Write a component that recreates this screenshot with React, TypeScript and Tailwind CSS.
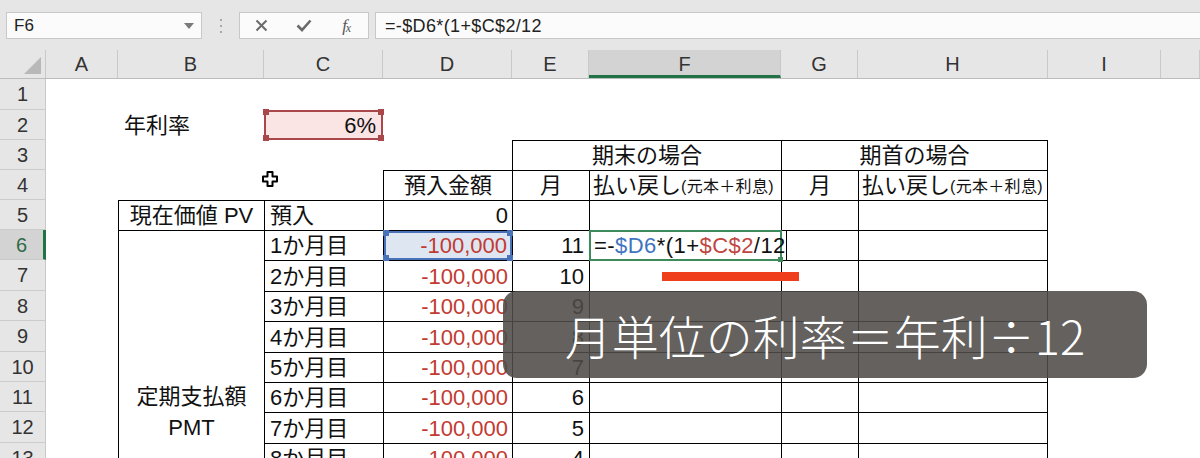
import React from "react";

const RS = [
  "",
  "row-start-1",
  "row-start-2",
  "row-start-3",
  "row-start-4",
  "row-start-5",
  "row-start-6",
  "row-start-7",
  "row-start-8",
  "row-start-9",
  "row-start-10",
  "row-start-11",
  "row-start-12",
  "row-start-13",
  "row-start-14",
  "row-start-15",
  "row-start-16",
  "row-start-17",
];

const COLS: { l: string; w: string; sel?: boolean }[] = [
  { l: "A", w: "w-[72px]" },
  { l: "B", w: "w-[146px]" },
  { l: "C", w: "w-[119px]" },
  { l: "D", w: "w-[129px]" },
  { l: "E", w: "w-[77px]" },
  { l: "F", w: "w-[192px]", sel: true },
  { l: "G", w: "w-[77px]" },
  { l: "H", w: "w-[190px]" },
  { l: "I", w: "w-[113px]" },
  { l: "", w: "w-[39px]" },
];

const T = "border-black";
const RED = "text-[#c23b32]";

function Handles({ color }: { color: string }) {
  return (
    <>
      <span className={`absolute -left-[3px] -top-[3px] w-[6px] h-[6px] ${color}`} />
      <span className={`absolute -right-[3px] -top-[3px] w-[6px] h-[6px] ${color}`} />
      <span className={`absolute -left-[3px] -bottom-[3px] w-[6px] h-[6px] ${color}`} />
      <span className={`absolute -right-[3px] -bottom-[3px] w-[6px] h-[6px] ${color}`} />
    </>
  );
}

export default function App() {
  const months = [6, 7, 8, 9, 10, 11, 12, 13, 14, 15, 16, 17];
  return (
    <div className="relative w-[1200px] h-[458px] overflow-hidden bg-white font-['Liberation_Sans','Noto_Sans_CJK_JP',sans-serif] text-[#111]">
      {/* toolbar */}
      <div className="h-[50px] bg-[#e6e6e6] flex items-start pt-[12px]">
        <div className="ml-[6px] w-[196px] h-[27px] bg-[#fbfbfb] border border-[#c8c8c8] flex items-center justify-between pl-[7px] pr-[7px]">
          <span className="text-[17px] text-[#222] leading-none">F6</span>
          <svg width="10" height="6" viewBox="0 0 10 6">
            <path d="M0 0 L10 0 L5 6 Z" fill="#7a7a7a" />
          </svg>
        </div>
        <div className="w-[37px] h-[27px] flex flex-col items-center justify-center gap-[4px]">
          <span className="w-[2px] h-[2px] bg-[#a8a8a8]" />
          <span className="w-[2px] h-[2px] bg-[#a8a8a8]" />
          <span className="w-[2px] h-[2px] bg-[#a8a8a8]" />
        </div>
        <div className="w-[130px] h-[27px] bg-[#fbfbfb] border border-[#c8c8c8] grid grid-cols-3 items-center">
          <div className="flex justify-center">
            <svg width="13" height="13" viewBox="0 0 13 13">
              <path d="M1.5 1.5 L11.5 11.5 M11.5 1.5 L1.5 11.5" stroke="#6a6a6a" strokeWidth="2" />
            </svg>
          </div>
          <div className="flex justify-center">
            <svg width="16" height="13" viewBox="0 0 16 13">
              <path d="M1.5 6.5 L6 11 L14.5 1.5" stroke="#6a6a6a" strokeWidth="2.6" fill="none" />
            </svg>
          </div>
          <div className="flex justify-center items-end font-['Liberation_Serif',serif] italic text-[#555] leading-none">
            <span className="text-[17px]">f</span>
            <span className="text-[12px] -ml-[1px]">x</span>
          </div>
        </div>
        <div className="ml-[6px] flex-1 h-[27px] bg-[#fbfbfb] border border-r-0 border-[#c8c8c8] flex items-center pl-[9px]">
          <span className="text-[18px] text-[#222] leading-none tracking-[0.02em]">=-$D6*(1+$C$2/12</span>
        </div>
      </div>

      {/* column header */}
      <div className="flex h-[29px] bg-[#e6e6e6] border-b border-[#bcbcbc]">
        <div className="relative w-[46px] h-full border-r border-[#c9c9c9]">
          <svg className="absolute right-[4px] bottom-[4px]" width="17" height="17" viewBox="0 0 17 17">
            <path d="M17 0 L17 17 L0 17 Z" fill="#b8b8b8" />
          </svg>
        </div>
        {COLS.map((c, i) => (
          <div
            key={i}
            className={`${c.w} h-full flex items-center justify-center text-[20px] leading-none ${
              c.sel
                ? "bg-[#d3d3d3] border-b-[3px] border-[#217346] text-[#333] border-r border-r-[#c9c9c9] pt-[3px]"
                : "border-r border-[#c9c9c9] text-[#333]"
            }`}
          >
            {c.l}
          </div>
        ))}
      </div>

      {/* sheet */}
      <div className="grid grid-cols-[46px_72px_146px_119px_129px_77px_192px_77px_190px_113px_39px] grid-rows-[31px_30px_30px_30px_30px_30px_31px_30px_31px_30px_30px_31px_30px_30px_30px_30px_30px]">
        {/* row headers */}
        {Array.from({ length: 17 }, (_, i) => i + 1).map((n) => (
          <div
            key={"rh" + n}
            className={`col-start-1 ${RS[n]} flex items-center justify-center text-[20px] leading-none border-b border-[#cbcbcb] ${
              n === 6
                ? "bg-[#d3d3d3] text-[#2f6b48] border-r-[3px] border-r-[#217346]"
                : "bg-[#e6e6e6] text-[#333] border-r border-r-[#c9c9c9]"
            }`}
          >
            {n}
          </div>
        ))}

        {/* row 2 */}
        <div className="col-start-3 row-start-2 flex items-center pl-[6px] text-[22px]">年利率</div>
        <div className="col-start-4 row-start-2 relative flex items-center justify-end pr-[7px] text-[22px]">
          <div className="absolute inset-0 bg-[#fbe4e4] border-[2px] border-[#a9474b]">
            <Handles color="bg-[#a9474b]" />
          </div>
          <span className="relative">6%</span>
        </div>

        {/* row 3 */}
        <div className={`col-start-6 col-span-2 row-start-3 border-l border-t ${T} flex items-center justify-center text-[22px]`}>
          期末の場合
        </div>
        <div className={`col-start-8 col-span-2 row-start-3 border-l border-t border-r ${T} flex items-center justify-center text-[22px]`}>
          期首の場合
        </div>

        {/* row 4 */}
        <div className={`col-start-5 row-start-4 border-l border-t ${T} flex items-center justify-center text-[22px]`}>預入金額</div>
        <div className={`col-start-6 row-start-4 border-l border-t ${T} flex items-center justify-center text-[22px]`}>月</div>
        <div className={`col-start-7 row-start-4 border-l border-t ${T} flex items-center pl-[3px] whitespace-nowrap`}>
          <span className="text-[22px]">払い戻し</span>
          <span className="text-[16px] tracking-[0.02em] pt-[3px]">(元本＋利息)</span>
        </div>
        <div className={`col-start-8 row-start-4 border-l border-t ${T} flex items-center justify-center text-[22px]`}>月</div>
        <div className={`col-start-9 row-start-4 border-l border-t border-r ${T} flex items-center pl-[3px] whitespace-nowrap`}>
          <span className="text-[22px]">払い戻し</span>
          <span className="text-[16px] tracking-[0.02em] pt-[3px]">(元本＋利息)</span>
        </div>

        {/* row 5 */}
        <div className={`col-start-3 row-start-5 border-l border-t ${T} flex items-center justify-center text-[22px] whitespace-nowrap`}>
          現在価値 PV
        </div>
        <div className={`col-start-4 row-start-5 border-l border-t ${T} flex items-center pl-[5px] text-[22px]`}>預入</div>
        <div className={`col-start-5 row-start-5 border-l border-t ${T} flex items-center justify-end pr-[4px] text-[22px]`}>0</div>
        <div className={`col-start-6 row-start-5 border-l border-t ${T}`} />
        <div className={`col-start-7 row-start-5 border-l border-t ${T}`} />
        <div className={`col-start-8 row-start-5 border-l border-t ${T}`} />
        <div className={`col-start-9 row-start-5 border-l border-t border-r ${T}`} />

        {/* merged B6 */}
        <div className={`col-start-3 row-start-6 row-span-12 border-l border-t ${T} flex flex-col items-center justify-center text-[22px] leading-[31px]`}>
          <span>定期支払額</span>
          <span>PMT</span>
        </div>

        {months.map((r) => (
          <React.Fragment key={"r" + r}>
            <div className={`col-start-4 ${RS[r]} border-l border-t ${T} flex items-center pl-[5px] text-[22px] whitespace-nowrap`}>
              {r - 5}か月目
            </div>
            {r === 6 ? (
              <div className={`col-start-5 ${RS[r]} relative border-l border-t ${T} flex items-center justify-end pr-[5px] text-[22px] ${RED}`}>
                <div className="absolute inset-0 bg-[#dee6f2] border-[2px] border-[#4a72b8]">
                  <Handles color="bg-[#4a72b8]" />
                </div>
                <span className="relative">-100,000</span>
              </div>
            ) : (
              <div className={`col-start-5 ${RS[r]} border-l border-t ${T} flex items-center justify-end pr-[4px] text-[22px] ${RED}`}>
                -100,000
              </div>
            )}
            <div className={`col-start-6 ${RS[r]} border-l border-t ${T} flex items-center justify-end pr-[5px] text-[22px]`}>
              {17 - r}
            </div>
            {r === 6 ? (
              <div className={`col-start-7 ${RS[r]} relative border-l border-t ${T}`}>
                <div className="absolute left-0 top-0 w-[197px] h-full bg-white border-r border-black z-10" />
                <div className="absolute -left-[1px] -top-[1px] w-[193px] h-[31px] border-[2px] border-[#3d8a5c] z-20">
                  <span className="absolute -right-[3px] -bottom-[3px] w-[5px] h-[5px] bg-[#3d8a5c]" />
                </div>
                <div className="absolute left-[4px] top-0 h-full flex items-center z-30 whitespace-nowrap text-[22px] leading-none tracking-[0.02em]">
                  <span>=-</span>
                  <span className="text-[#3f74c0]">$D6</span>
                  <span>*(1+</span>
                  <span className="text-[#c0463f]">$C$2</span>
                  <span>/12</span>
                </div>
              </div>
            ) : (
              <div className={`col-start-7 ${RS[r]} border-l border-t ${T}`} />
            )}
            <div className={`col-start-8 ${RS[r]} border-l border-t ${T}`} />
            <div className={`col-start-9 ${RS[r]} border-l border-t border-r ${T}`} />
          </React.Fragment>
        ))}
      </div>

      {/* cursor */}
      <svg className="absolute left-[262px] top-[171px]" width="16" height="16" viewBox="0 0 16 16">
        <path
          d="M5.5 1 H10.5 V5.5 H15 V10.5 H10.5 V15 H5.5 V10.5 H1 V5.5 H5.5 Z"
          fill="white"
          stroke="black"
          strokeWidth="2"
          strokeLinejoin="round"
        />
      </svg>

      {/* red underline annotation */}
      <div className="absolute left-[662px] top-[272px] w-[137px] h-[9px] bg-[#ee3e1c] z-40" />

      {/* caption overlay */}
      <div className="absolute left-[503px] top-[291px] w-[644px] h-[87px] rounded-[14px] bg-[rgba(79,75,72,0.88)] z-50 flex items-center justify-center">
        <span className="text-white text-[47px] font-light leading-none font-['Noto_Sans_CJK_JP',sans-serif] whitespace-nowrap">
          月単位の利率＝年利÷12
        </span>
      </div>
    </div>
  );
}
